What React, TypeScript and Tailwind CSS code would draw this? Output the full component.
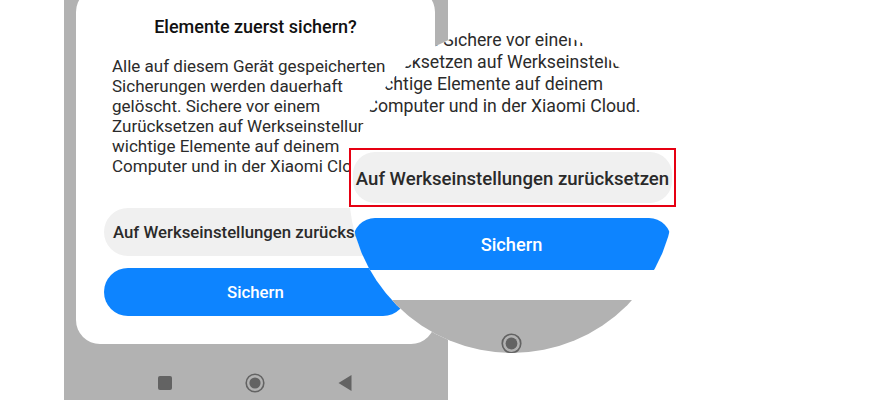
const FONT = 'font-["Roboto",sans-serif]';

function HomeIcon({ size }: { size: number }) {
  return (
    <svg width={size} height={size} viewBox="0 0 20 20">
      <circle cx="10" cy="10" r="8.8" fill="none" stroke="#636363" strokeWidth="1.6" />
      <circle cx="10" cy="10" r="5.6" fill="#636363" />
    </svg>
  );
}

function SmallDialog() {
  return (
    <div className="-mt-3 flex h-[356px] w-[359px] flex-col rounded-[24px] bg-white pt-[27px]">
      <h2 className="text-center text-[18px] leading-6 font-medium text-[#111]">Elemente zuerst sichern?</h2>
      <p className="mt-[17px] ml-[36px] text-[17px] leading-5 whitespace-nowrap text-[#2b2b2b]">
        Alle auf diesem Gerät gespeicherten<br />
        Sicherungen werden dauerhaft<br />
        gelöscht. Sichere vor einem<br />
        Zurücksetzen auf Werkseinstellungen<br />
        wichtige Elemente auf deinem<br />
        Computer und in der Xiaomi Cloud.
      </p>
      <div className="mt-[32px] ml-[28px] flex h-12 w-[303px] items-center rounded-[24px] bg-[#f0f0f0] pt-[1px] pl-[9px] text-[16.8px] font-medium whitespace-nowrap text-[#2a2a2a]">
        Auf Werkseinstellungen zurücksetzen
      </div>
      <div className="mt-[12px] ml-[28px] flex h-12 w-[303px] items-center justify-center rounded-[24px] bg-[#0d84ff] pt-[1px] text-[16.8px] font-medium text-white">
        Sichern
      </div>
    </div>
  );
}

function Magnifier() {
  return (
    <div className="absolute top-[27px] left-[348.5px] flex h-[326px] w-[326px] flex-col overflow-hidden rounded-full bg-white">
      <p className="mt-[2px] ml-[18px] text-[17.7px] leading-[22px] whitespace-nowrap text-[#2b2b2b]">
        gelöscht. Sichere vor einem<br />
        Zurücksetzen auf Werkseinstellungen<br />
        wichtige Elemente auf deinem<br />
        Computer und in der Xiaomi Cloud.
      </p>
      <div className="mt-[101px] ml-[4px] flex h-[52px] w-[318px] shrink-0 items-center justify-center rounded-t-[22px] bg-[#0d84ff] pt-[2px] text-[18.2px] font-medium text-white">
        Sichern
      </div>
      <div className="mt-[30px] flex flex-1 justify-center bg-[#b2b2b2] pt-[33px]">
        <HomeIcon size={21} />
      </div>
    </div>
  );
}

export default function App() {
  return (
    <div className={`relative h-[400px] w-[879px] overflow-hidden bg-white ${FONT}`}>
      <div className="ml-[64px] flex h-[400px] w-[384px] flex-col bg-[#b2b2b2] pl-[12px]">
        <SmallDialog />
        <div className="mt-[29px] ml-[82px] flex w-[194px] items-center justify-between">
          <div className="h-[14px] w-[14px] rounded-[2px] bg-[#636363]" />
          <HomeIcon size={20} />
          <svg width="14" height="16" viewBox="0 0 14 16">
            <path d="M13.5 0 V16 L0.5 8 Z" fill="#636363" />
          </svg>
        </div>
      </div>
      <Magnifier />
      <div className="absolute top-[148px] left-[349px] h-[59px] w-[327px] border-2 border-[#e60012] bg-white p-[2px]">
        <div className="flex h-full items-center justify-center rounded-[22px] bg-[#f0f0f0] pt-[4px] text-[18.6px] font-medium whitespace-nowrap text-[#2a2a2a]">
          Auf Werkseinstellungen zurücksetzen
        </div>
      </div>
    </div>
  );
}
